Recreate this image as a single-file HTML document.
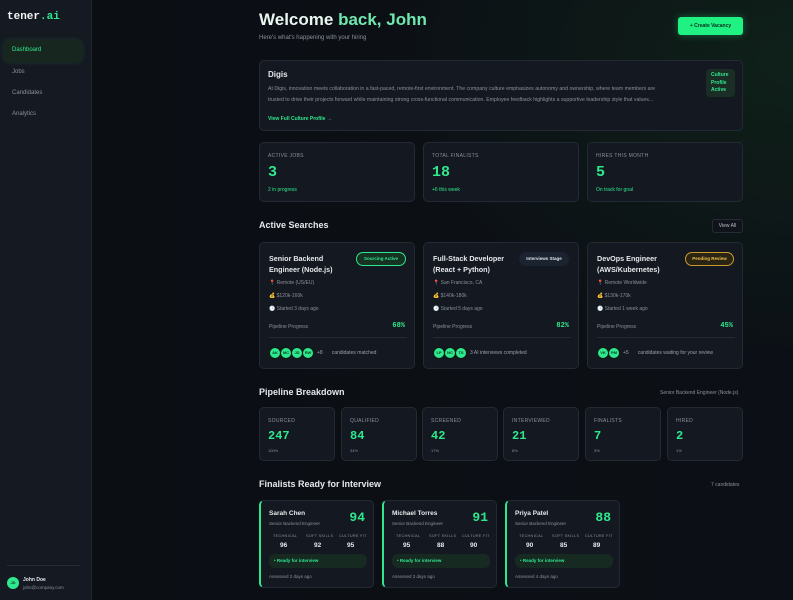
<!DOCTYPE html>
<html><head><meta charset="utf-8"><style>
*{box-sizing:border-box;margin:0;padding:0}
body{width:793px;height:600px;overflow:hidden;background:#0c0f15;font-family:"Liberation Sans",sans-serif;color:#e6e8ec;position:relative}
.a{position:absolute}
.side{left:0;top:0;width:92px;height:600px;background:#151921;border-right:1px solid #1f242d}
.main{left:92px;top:0;width:701px;height:600px;background:radial-gradient(ellipse 420px 300px at 700px 60px,#0f2019 0%,rgba(12,15,21,0) 100%),linear-gradient(90deg,#0b0e13 0%,#0c1016 100%)}
.card{position:absolute;background:#141820;border:1px solid #232a33;border-radius:5px}
.g{color:#2ee88e}
.mu{color:#8a919c}
.lbl{font-size:5px;color:#8a919c;letter-spacing:.3px}
.num{font-family:"Liberation Mono",monospace;font-weight:bold;color:#2ee88e}
.avs{position:absolute;left:9px;top:104px;display:flex;align-items:center;font-size:5px;color:#9aa1ab;white-space:nowrap}
.av{flex:none;width:12px;height:12px;border-radius:50%;background:#2ee88e;color:#0b3a22;font-size:4px;font-weight:bold;text-align:center;line-height:10px;margin-right:-1px;border:1px solid #0d1a14}
</style></head><body>
<div class="a side">
 <div class="a" style="left:7px;top:11px;font-family:'Liberation Mono',monospace;font-weight:bold;font-size:11px;color:#f1f3f5">tener<span class="g">.ai</span></div>
 <div class="a" style="left:4px;top:40px;width:78px;height:22px;background:#17271f;border-radius:5px;box-shadow:0 0 6px rgba(46,232,142,.15)"></div>
 <div class="a g" style="left:12px;top:47px;font-size:6px">Dashboard</div>
 <div class="a mu" style="left:12px;top:69px;font-size:6px">Jobs</div>
 <div class="a mu" style="left:12px;top:90px;font-size:6px">Candidates</div>
 <div class="a mu" style="left:12px;top:111px;font-size:6px">Analytics</div>
 <div class="a" style="left:7px;top:565px;width:73px;height:1px;background:#262c35"></div>
 <div class="a" style="left:7px;top:577px;width:12px;height:12px;border-radius:50%;background:#2ee88e;color:#0b3a22;font-size:4px;text-align:center;line-height:12px;font-weight:bold">JD</div>
 <div class="a" style="left:23px;top:577px;font-size:5px;font-weight:bold">John Doe</div>
 <div class="a mu" style="left:23px;top:585px;font-size:4.5px">john@company.com</div>
</div>
<div class="a main"></div>

<div class="a" style="left:259px;top:10px;font-size:17px;font-weight:bold;color:#e9f5ef">Welcome <span style="color:#6fe8b0">back, John</span></div>
<div class="a mu" style="left:259px;top:35px;font-size:6px">Here's what's happening with your hiring</div>
<div class="a" style="left:678px;top:17px;width:65px;height:18px;background:#1ff283;border-radius:3px;box-shadow:0 0 8px rgba(31,242,131,.35);color:#06301a;font-size:5px;font-weight:bold;text-align:center;line-height:18px">+ Create Vacancy</div>

<div class="card" style="left:259px;top:60px;width:484px;height:71px">
 <div class="a" style="left:8px;top:9px;font-size:8px;font-weight:bold">Digis</div>
 <div class="a mu" style="left:8px;top:23px;width:432px;font-size:5.2px;line-height:10.5px;white-space:nowrap;overflow:hidden">At Digis, innovation meets collaboration in a fast-paced, remote-first environment. The company culture emphasizes autonomy and ownership, where team members are<br>trusted to drive their projects forward while maintaining strong cross-functional communication. Employee feedback highlights a supportive leadership style that values...</div>
 <div class="a g" style="left:8px;top:55px;font-size:5px;font-weight:bold">View Full Culture Profile →</div>
 <div class="a g" style="left:446px;top:8px;width:29px;height:28px;background:#1b2e26;border-radius:4px;font-size:5px;font-weight:bold;line-height:7.5px;padding:3px 5px">Culture Profile Active</div>
</div>

<div class="card" style="left:259px;top:142px;width:156px;height:60px"><div class="a lbl" style="left:8px;top:10px">ACTIVE JOBS</div><div class="a num" style="left:8px;top:21px;font-size:15px">3</div><div class="a g" style="left:8px;top:44px;font-size:5px">2 in progress</div></div>
<div class="card" style="left:423px;top:142px;width:156px;height:60px"><div class="a lbl" style="left:8px;top:10px">TOTAL FINALISTS</div><div class="a num" style="left:8px;top:21px;font-size:15px">18</div><div class="a g" style="left:8px;top:44px;font-size:5px">+6 this week</div></div>
<div class="card" style="left:587px;top:142px;width:156px;height:60px"><div class="a lbl" style="left:8px;top:10px">HIRES THIS MONTH</div><div class="a num" style="left:8px;top:21px;font-size:15px">5</div><div class="a g" style="left:8px;top:44px;font-size:5px">On track for goal</div></div>

<div class="a" style="left:259px;top:220px;font-size:9px;font-weight:bold">Active Searches</div>
<div class="a" style="left:712px;top:219px;width:31px;height:14px;border:1px solid #262c35;border-radius:3px;background:#10141a;font-size:5px;color:#b8bec7;text-align:center;line-height:12px">View All</div>

<div class="card" style="left:259px;top:242px;width:156px;height:127px">
 <div class="a" style="left:9px;top:10px;font-size:7.2px;font-weight:bold;line-height:11px;width:80px">Senior Backend Engineer (Node.js)</div>
 <div class="a" style="left:96px;top:9px;width:50px;height:14px;border:1px solid #2ee88e;border-radius:7px;background:#163223;color:#2ee88e;font-size:4.5px;font-weight:bold;text-align:center;line-height:12px">Sourcing Active</div>
 <div class="a mu" style="left:9px;top:37px;font-size:5px">📍 Remote (US/EU)</div>
 <div class="a mu" style="left:9px;top:50px;font-size:5px">💰 $120k-160k</div>
 <div class="a mu" style="left:9px;top:63px;font-size:5px">🕒 Started 3 days ago</div>
 <div class="a mu" style="left:9px;top:81px;font-size:5px">Pipeline Progress</div>
 <div class="a num" style="right:9px;top:79px;font-size:7px">68%</div>
 <div class="a" style="left:9px;top:94px;width:138px;height:1px;background:#232a33"></div>
 <div class="avs"><div class="av">AK</div><div class="av">MC</div><div class="av">JD</div><div class="av">RW</div><span style="margin-left:4px">+8</span><span style="margin-left:9px">candidates matched</span></div>
</div>
<div class="card" style="left:423px;top:242px;width:156px;height:127px">
 <div class="a" style="left:9px;top:10px;font-size:7.2px;font-weight:bold;line-height:11px;width:80px">Full-Stack Developer (React + Python)</div>
 <div class="a" style="left:95px;top:9px;width:50px;height:14px;border-radius:7px;background:#1b2330;color:#dfe3e8;font-size:4.5px;font-weight:bold;text-align:center;line-height:14px">Interviews Stage</div>
 <div class="a mu" style="left:9px;top:37px;font-size:5px">📍 San Francisco, CA</div>
 <div class="a mu" style="left:9px;top:50px;font-size:5px">💰 $140k-180k</div>
 <div class="a mu" style="left:9px;top:63px;font-size:5px">🕒 Started 5 days ago</div>
 <div class="a mu" style="left:9px;top:81px;font-size:5px">Pipeline Progress</div>
 <div class="a num" style="right:9px;top:79px;font-size:7px">82%</div>
 <div class="a" style="left:9px;top:94px;width:138px;height:1px;background:#232a33"></div>
 <div class="avs"><div class="av">LP</div><div class="av">NC</div><div class="av">TS</div><span style="margin-left:4px">3 AI interviews completed</span></div>
</div>
<div class="card" style="left:587px;top:242px;width:156px;height:127px">
 <div class="a" style="left:9px;top:10px;font-size:7.2px;font-weight:bold;line-height:11px;width:85px">DevOps Engineer (AWS/Kubernetes)</div>
 <div class="a" style="left:97px;top:9px;width:49px;height:14px;border:1px solid #c99a2e;border-radius:7px;background:#2a2414;color:#f2c04a;font-size:4.5px;font-weight:bold;text-align:center;line-height:12px">Pending Review</div>
 <div class="a mu" style="left:9px;top:37px;font-size:5px">📍 Remote Worldwide</div>
 <div class="a mu" style="left:9px;top:50px;font-size:5px">💰 $130k-170k</div>
 <div class="a mu" style="left:9px;top:63px;font-size:5px">🕒 Started 1 week ago</div>
 <div class="a mu" style="left:9px;top:81px;font-size:5px">Pipeline Progress</div>
 <div class="a num" style="right:9px;top:79px;font-size:7px">45%</div>
 <div class="a" style="left:9px;top:94px;width:138px;height:1px;background:#232a33"></div>
 <div class="avs"><div class="av">VK</div><div class="av">PM</div><span style="margin-left:4px">+5</span><span style="margin-left:9px">candidates waiting for your review</span></div>
</div>

<div class="a" style="left:259px;top:387px;font-size:9px;font-weight:bold">Pipeline Breakdown</div>
<div class="a mu" style="left:660px;top:390px;font-size:5px">Senior Backend Engineer (Node.js)</div>

<div class="card" style="left:259px;top:407px;width:76px;height:54px"><div class="a lbl" style="left:8px;top:10px">SOURCED</div><div class="a num" style="left:8px;top:21px;font-size:12px">247</div><div class="a mu" style="left:8px;top:40px;font-size:4px">100%</div></div>
<div class="card" style="left:341px;top:407px;width:76px;height:54px"><div class="a lbl" style="left:8px;top:10px">QUALIFIED</div><div class="a num" style="left:8px;top:21px;font-size:12px">84</div><div class="a mu" style="left:8px;top:40px;font-size:4px">34%</div></div>
<div class="card" style="left:422px;top:407px;width:76px;height:54px"><div class="a lbl" style="left:8px;top:10px">SCREENED</div><div class="a num" style="left:8px;top:21px;font-size:12px">42</div><div class="a mu" style="left:8px;top:40px;font-size:4px">17%</div></div>
<div class="card" style="left:503px;top:407px;width:76px;height:54px"><div class="a lbl" style="left:8px;top:10px">INTERVIEWED</div><div class="a num" style="left:8px;top:21px;font-size:12px">21</div><div class="a mu" style="left:8px;top:40px;font-size:4px">8%</div></div>
<div class="card" style="left:585px;top:407px;width:76px;height:54px"><div class="a lbl" style="left:8px;top:10px">FINALISTS</div><div class="a num" style="left:8px;top:21px;font-size:12px">7</div><div class="a mu" style="left:8px;top:40px;font-size:4px">3%</div></div>
<div class="card" style="left:667px;top:407px;width:76px;height:54px"><div class="a lbl" style="left:8px;top:10px">HIRED</div><div class="a num" style="left:8px;top:21px;font-size:12px">2</div><div class="a mu" style="left:8px;top:40px;font-size:4px">1%</div></div>

<div class="a" style="left:259px;top:479px;font-size:9px;font-weight:bold">Finalists Ready for Interview</div>
<div class="a mu" style="left:711px;top:482px;font-size:5px">7 candidates</div>

<div class="card" style="left:259px;top:500px;width:115px;height:88px;border-left:2px solid #2ee88e">
 <div class="a" style="left:8px;top:9px;font-size:6.5px;font-weight:bold">Sarah Chen</div>
 <div class="a mu" style="left:8px;top:20px;font-size:4.5px">Senior Backend Engineer</div>
 <div class="a num" style="right:8px;top:9px;font-size:13px">94</div>
 <div class="a lbl" style="left:12px;top:33px;font-size:3.8px">TECHNICAL</div><div class="a lbl" style="left:45px;top:33px;font-size:3.8px">SOFT SKILLS</div><div class="a lbl" style="left:78px;top:33px;font-size:3.8px">CULTURE FIT</div>
 <div class="a" style="left:19px;top:41px;font-size:6.5px;font-weight:bold">96</div><div class="a" style="left:53px;top:41px;font-size:6.5px;font-weight:bold">92</div><div class="a" style="left:86px;top:41px;font-size:6.5px;font-weight:bold">95</div>
 <div class="a g" style="left:8px;top:53px;width:98px;height:14px;background:#162a22;border-radius:6px;font-size:4.5px;font-weight:bold;line-height:14px;padding-left:5px">• Ready for interview</div>
 <div class="a mu" style="left:8px;top:73px;font-size:4.5px">Assessed 2 days ago</div>
</div>
<div class="card" style="left:382px;top:500px;width:115px;height:88px;border-left:2px solid #2ee88e">
 <div class="a" style="left:8px;top:9px;font-size:6.5px;font-weight:bold">Michael Torres</div>
 <div class="a mu" style="left:8px;top:20px;font-size:4.5px">Senior Backend Engineer</div>
 <div class="a num" style="right:8px;top:9px;font-size:13px">91</div>
 <div class="a lbl" style="left:12px;top:33px;font-size:3.8px">TECHNICAL</div><div class="a lbl" style="left:45px;top:33px;font-size:3.8px">SOFT SKILLS</div><div class="a lbl" style="left:78px;top:33px;font-size:3.8px">CULTURE FIT</div>
 <div class="a" style="left:19px;top:41px;font-size:6.5px;font-weight:bold">95</div><div class="a" style="left:53px;top:41px;font-size:6.5px;font-weight:bold">88</div><div class="a" style="left:86px;top:41px;font-size:6.5px;font-weight:bold">90</div>
 <div class="a g" style="left:8px;top:53px;width:98px;height:14px;background:#162a22;border-radius:6px;font-size:4.5px;font-weight:bold;line-height:14px;padding-left:5px">• Ready for interview</div>
 <div class="a mu" style="left:8px;top:73px;font-size:4.5px">Assessed 3 days ago</div>
</div>
<div class="card" style="left:505px;top:500px;width:115px;height:88px;border-left:2px solid #2ee88e">
 <div class="a" style="left:8px;top:9px;font-size:6.5px;font-weight:bold">Priya Patel</div>
 <div class="a mu" style="left:8px;top:20px;font-size:4.5px">Senior Backend Engineer</div>
 <div class="a num" style="right:8px;top:9px;font-size:13px">88</div>
 <div class="a lbl" style="left:12px;top:33px;font-size:3.8px">TECHNICAL</div><div class="a lbl" style="left:45px;top:33px;font-size:3.8px">SOFT SKILLS</div><div class="a lbl" style="left:78px;top:33px;font-size:3.8px">CULTURE FIT</div>
 <div class="a" style="left:19px;top:41px;font-size:6.5px;font-weight:bold">90</div><div class="a" style="left:53px;top:41px;font-size:6.5px;font-weight:bold">85</div><div class="a" style="left:86px;top:41px;font-size:6.5px;font-weight:bold">89</div>
 <div class="a g" style="left:8px;top:53px;width:98px;height:14px;background:#162a22;border-radius:6px;font-size:4.5px;font-weight:bold;line-height:14px;padding-left:5px">• Ready for interview</div>
 <div class="a mu" style="left:8px;top:73px;font-size:4.5px">Assessed 4 days ago</div>
</div>
</body></html>
